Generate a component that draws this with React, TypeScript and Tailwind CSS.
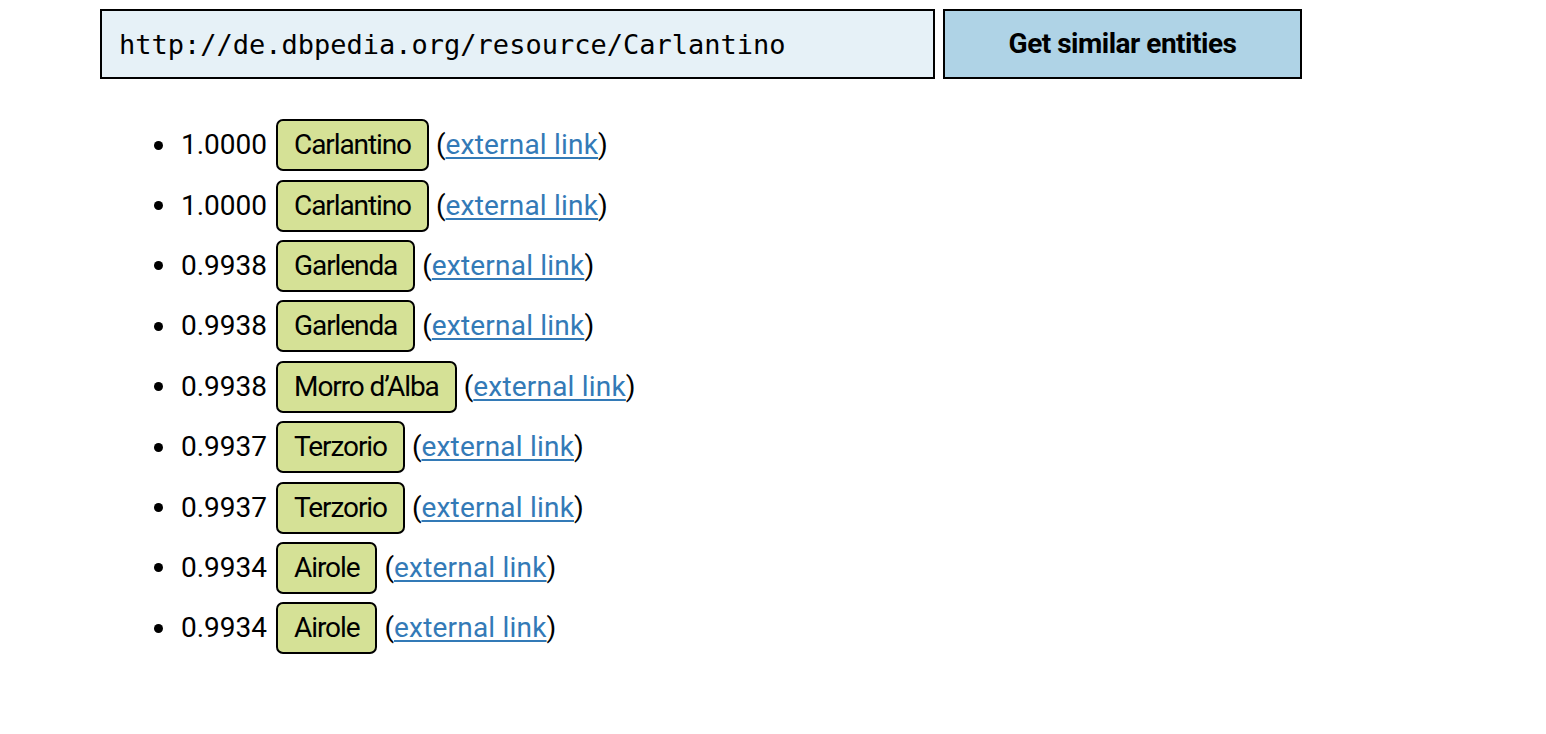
import React from "react";

const rows: [string, string][] = [
  ["1.0000", "Carlantino"],
  ["1.0000", "Carlantino"],
  ["0.9938", "Garlenda"],
  ["0.9938", "Garlenda"],
  ["0.9938", "Morro d\u2019Alba"],
  ["0.9937", "Terzorio"],
  ["0.9937", "Terzorio"],
  ["0.9934", "Airole"],
  ["0.9934", "Airole"],
];

export default function App() {
  return (
    <div className="min-h-screen bg-white text-black" style={{ fontFamily: "Roboto, 'Noto Sans', sans-serif" }}>
      <div className="pl-[100px] pt-[9px]">
        <div className="flex gap-[8px]">
          <input
            readOnly
            value="http://de.dbpedia.org/resource/Carlantino"
            className="h-[70px] w-[835px] border-2 border-black bg-[#e6f1f7] pl-[17px] text-[27px] text-black outline-none"
            style={{ fontFamily: "'DejaVu Sans Mono', 'Liberation Mono', monospace" }}
          />
          <button className="h-[70px] w-[359px] border-2 border-black bg-[#afd3e6] text-[28px] font-bold tracking-[-0.5px] text-black">
            Get similar entities
          </button>
        </div>
        <ul className="mt-[36px] flex flex-col">
          {rows.map(([score, name], i) => (
            <li key={i} className="flex h-[60.4px] items-center text-[28px] leading-[40px]">
              <span className="ml-[54px] mr-[18px] h-[9px] w-[9px] rounded-full bg-black" />
              <span>{score}</span>
              <span className="ml-[9px] rounded-[7px] border-2 border-black bg-[#d5e196] px-[16px] py-[4px] tracking-[-1.1px]">{name}</span>
              <span className="ml-[7px]">
                (<a href="#" className="text-[#337ab7] underline decoration-2 underline-offset-[3px] tracking-[0.2px]">external link</a>)
              </span>
            </li>
          ))}
        </ul>
      </div>
    </div>
  );
}
